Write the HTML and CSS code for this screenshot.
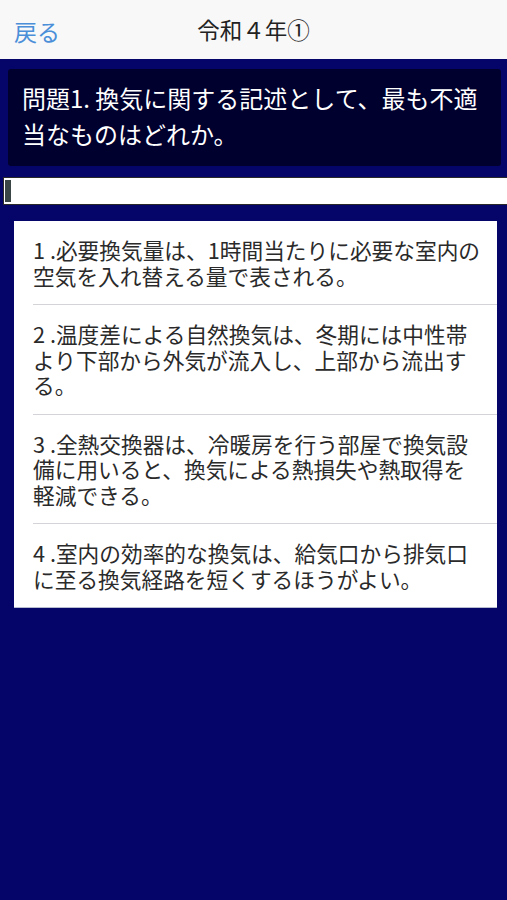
FILE: index.html
```html
<!DOCTYPE html>
<html lang="ja">
<head>
<meta charset="utf-8">
<title>令和４年①</title>
<link rel="stylesheet" href="styles.css">
</head>
<body>
<header class="navbar">
  <a class="back">戻る</a>
  <h1 class="title">令和４年①</h1>
  <span class="spacer"></span>
</header>
<main class="content">
  <section class="question">問題1. 換気に関する記述として、最も不適当なものはどれか。</section>
  <div class="answer-field"><span class="cursor"></span></div>
  <ul class="choices">
    <li class="choice">1 .必要換気量は、1時間当たりに必要な室内の空気を入れ替える量で表される。</li>
    <li class="choice">2 .温度差による自然換気は、冬期には中性帯より下部から外気が流入し、上部から流出する。</li>
    <li class="choice">3 .全熱交換器は、冷暖房を行う部屋で換気設備に用いると、換気による熱損失や熱取得を軽減できる。</li>
    <li class="choice">4 .室内の効率的な換気は、給気口から排気口に至る換気経路を短くするほうがよい。</li>
  </ul>
</main>
</body>
</html>
```
FILE: styles.css
```css
html, body {
  margin: 0;
  padding: 0;
}
body {
  width: 507px;
  min-height: 900px;
  background: #050569;
  font-family: "Noto Sans CJK JP", "Noto Sans", sans-serif;
}
.navbar {
  height: 59px;
  background: #f8f8f8;
  display: grid;
  grid-template-columns: 1fr auto 1fr;
  align-items: center;
  padding: 0 14px;
  box-sizing: border-box;
}
.back {
  font-size: 23px;
  color: #4a8fd8;
  line-height: 1;
  justify-self: start;
  margin-top: 3px;
}
.title {
  margin: 0;
  font-size: 22.5px;
  font-weight: 400;
  color: #222222;
  line-height: 1;
}
.content {
  padding-top: 10px;
  padding-bottom: 40px;
}
.question {
  margin: 0 6px 0 8px;
  padding: 11px 14px 14px 14px;
  background: #00002e;
  border-radius: 3px;
  color: #ffffff;
  font-size: 24px;
  line-height: 36px;
}
.answer-field {
  margin: 11px 0 0 3px;
  height: 28px;
  box-sizing: border-box;
  background: #ffffff;
  border: 1px solid #2a2a2a;
  border-right: none;
  display: flex;
  align-items: center;
  padding-left: 1px;
}
.cursor {
  width: 6px;
  height: 22px;
  background: #3a4646;
}
.choices {
  list-style: none;
  margin: 16px 10px 0 14px;
  padding: 0 0 0 19px;
  background: #ffffff;
  border-bottom: 1px solid #b8bccf;
}
.choice {
  padding: 16px 13px 16px 0;
  font-size: 21.7px;
  line-height: 25.5px;
  color: #2a2a2a;
  border-bottom: 1px solid #d4d4d8;
}
.choice:last-child {
  border-bottom: none;
}
```
